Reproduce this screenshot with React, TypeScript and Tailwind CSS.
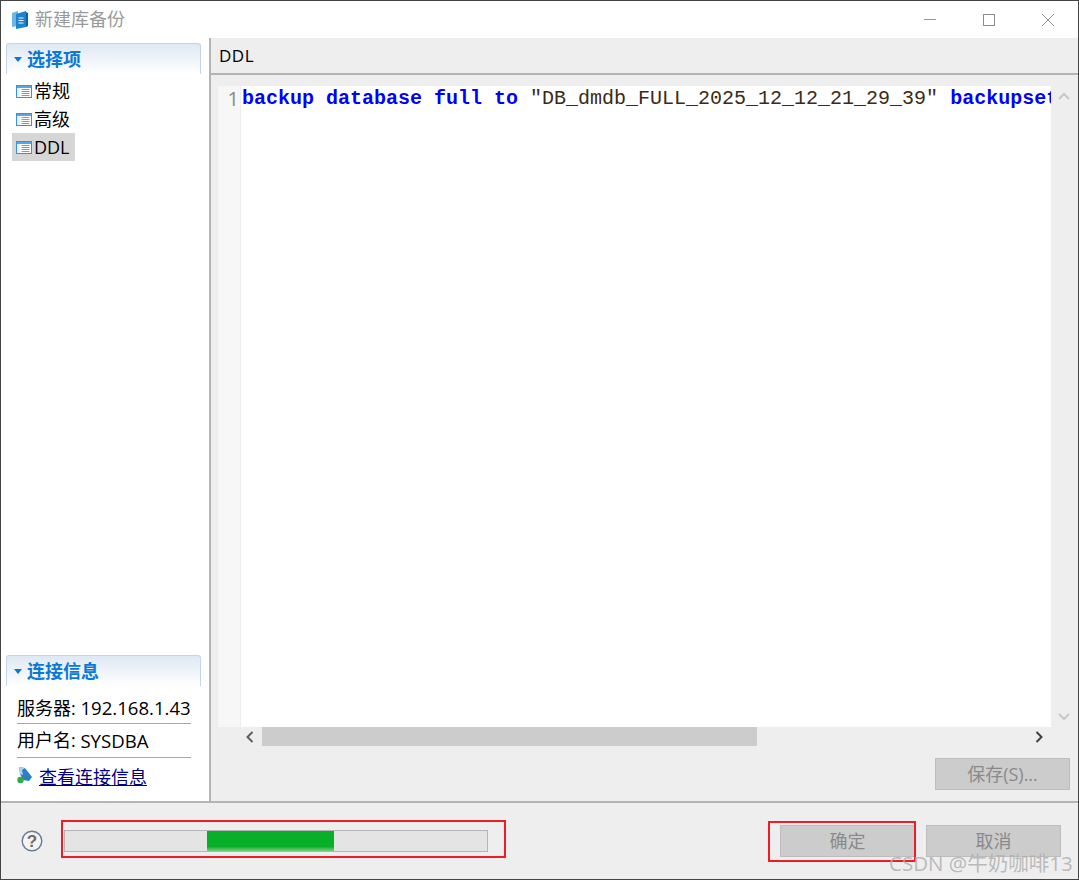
const cjk = { fontFamily: '"Open Sans", "Noto Sans CJK SC", sans-serif' };

function PageIcon() {
  return (
    <svg width="17" height="15" viewBox="0 0 17 15" className="shrink-0">
      <rect x="0.5" y="1.5" width="15" height="12" fill="#fff" stroke="#3d8fd6" />
      <rect x="1" y="2" width="14" height="2" fill="#5ba5e3" />
      <rect x="1" y="4" width="3" height="9" fill="#e6f0f9" />
      <path d="M5.5 5.5h8M5.5 7.5h8M5.5 9.5h8M5.5 11.5h8" stroke="#8a9bb0" strokeWidth="1" />
    </svg>
  );
}

function SectionHeader({ title }: { title: string }) {
  return (
    <div className="h-[31px] ml-[5px] mr-[8px] flex items-center gap-[5px] pl-[7px] rounded-t-[3px] border-t border-x border-[#c3d5e8] border-b-0 bg-gradient-to-b from-[#dfe8f3] to-white">
      <svg width="8" height="5" viewBox="0 0 8 5">
        <path d="M0 0h8L4 5z" fill="#0a78d7" />
      </svg>
      <span className="text-[18px] font-bold text-[#0a78d7] leading-none">{title}</span>
    </div>
  );
}

function NavItem({ label, active }: { label: string; active?: boolean }) {
  return (
    <div className={`h-[28px] w-[63px] flex items-center gap-[1px] pl-[4px] text-[18px] text-black ${active ? 'bg-[#d6d6d6]' : ''}`}>
      <PageIcon />
      <span>{label}</span>
    </div>
  );
}

function DialogButton({ label }: { label: string }) {
  return (
    <div className="h-[32px] w-[135px] flex items-center justify-center bg-[#cccccc] border border-[#bdbdbd] text-[18px] text-[#8a8a8a]">
      {label}
    </div>
  );
}

export default function App() {
  return (
    <div style={cjk} className="relative w-[1079px] h-[880px] bg-white border border-[#444444] flex flex-col overflow-hidden">
      {/* Title bar */}
      <div className="h-[37px] shrink-0 flex items-center bg-white pl-[11px]">
        <svg width="18" height="20" viewBox="0 0 18 20" className="mr-[5px]">
          <path d="M0 3l6-2v15l-6 1z" fill="#6db4e8" />
          <path d="M4 4l10-3v16l-10 2z" fill="#1b84d0" />
          <path d="M14 2l2 1v13l-2 1z" fill="#0d5f9e" />
          <path d="M6.5 8h5M6.5 10.5h5M6.5 13h5" stroke="#e8f3fb" strokeWidth="1.2" />
        </svg>
        <span className="text-[18px] text-[#9a9a9a]">新建库备份</span>
        <div className="ml-auto flex items-center text-[#8c8c8c]">
          <div className="w-[60px] flex justify-center">
            <div className="w-[12px] h-px bg-[#999999]" />
          </div>
          <div className="w-[58px] flex justify-center">
            <div className="w-[12px] h-[12px] border border-[#8c8c8c]" />
          </div>
          <div className="w-[60px] flex justify-center">
            <svg width="14" height="14" viewBox="0 0 14 14">
              <path d="M1 1l12 12M13 1L1 13" stroke="#8c8c8c" strokeWidth="1" fill="none" />
            </svg>
          </div>
        </div>
      </div>

      {/* Main */}
      <div className="flex flex-1 min-h-0">
        {/* Left pane */}
        <div className="w-[210px] shrink-0 bg-white flex flex-col pt-[5px] border-r-2 border-[#b4b4b4]">
          <SectionHeader title="选择项" />
          <div className="pl-[11px] flex flex-col mt-[3px]">
            <NavItem label="常规" />
            <NavItem label="高级" />
            <NavItem label="DDL" active />
          </div>
          <div className="flex-1" />
          <SectionHeader title="连接信息" />
          <div className="px-[16px] pt-[3px] pb-[6px] text-[18px] text-black">
            <div className="h-[35px] pt-[4px] flex items-center border-b border-[#a8a8a8] whitespace-nowrap w-[174px]">
              <span className="whitespace-pre">服务器: </span>
              <span className="text-[18.6px]">192.168.1.43</span>
            </div>
            <div className="h-[34px] flex items-center border-b border-[#a8a8a8] w-[174px]">
              <span className="whitespace-pre">用户名: </span>
              <span className="text-[18.6px]">SYSDBA</span>
            </div>
            <div className="h-[37px] pt-[2px] flex items-center gap-[6px]">
              <svg width="16" height="18" viewBox="0 0 16 18" className="-mt-[6px]">
                <path d="M2 1l6 1 7 9-3 4-6-1-3-6z" fill="#2d7fc4" />
                <path d="M2 1l6 1-3 2 1 5-3-1z" fill="#b5d2ea" />
                <circle cx="3.5" cy="14" r="3.2" fill="#2fae3f" />
              </svg>
              <span className="underline text-[#000080]">查看连接信息</span>
            </div>
          </div>
        </div>

        {/* Right pane */}
        <div className="flex-1 min-w-0 flex flex-col bg-[#eeeeee]">
          <div className="h-[37px] shrink-0 flex items-center pl-[8px] border-b-2 border-[#b4b4b4] text-[17px] tracking-[0.5px] text-black">DDL</div>

          <div className="flex-1 min-h-0 flex flex-col pt-[11px] pl-[7px]">
            {/* Editor */}
            <div className="flex h-[641px] shrink-0">
              <div className="w-[833px] flex bg-white overflow-hidden">
                <div className="w-[23px] shrink-0 bg-[#f7f7f7] border-r border-[#eeeeee] text-right pr-[1px] pt-[1px] text-[20px] leading-[24px] text-[#8a8a8a]">1</div>
                <div
                  className="pl-[1px] pt-[1px] text-[20px] leading-[24px] whitespace-nowrap text-[#3a2a1a]"
                  style={{ fontFamily: '"Liberation Mono", monospace' }}
                >
                  <span className="font-bold text-[#0000ff]">backup database full to </span>
                  <span>"DB_dmdb_FULL_2025_12_12_21_29_39" </span>
                  <span className="font-bold text-[#0000ff]">backupset</span>
                </div>
              </div>
              <div className="flex-1 flex flex-col items-center justify-between py-[6px] pr-[1px]">
                <svg width="12" height="8" viewBox="0 0 12 8">
                  <path d="M1 7l5-5 5 5" stroke="#c8c8c8" strokeWidth="2" fill="none" />
                </svg>
                <svg width="12" height="8" viewBox="0 0 12 8">
                  <path d="M1 1l5 5 5-5" stroke="#c8c8c8" strokeWidth="2" fill="none" />
                </svg>
              </div>
            </div>

            {/* Horizontal scrollbar */}
            <div className="h-[19px] w-[833px] shrink-0 flex items-center">
              <div className="w-[44px] flex justify-center pl-[20px]">
                <svg width="8" height="12" viewBox="0 0 8 12">
                  <path d="M6.5 1L1.5 6l5 5" stroke="#606060" strokeWidth="2" fill="none" />
                </svg>
              </div>
              <div className="w-[495px] h-full bg-[#cccccc]" />
              <div className="flex-1 flex justify-end pr-[8px]">
                <svg width="8" height="12" viewBox="0 0 8 12">
                  <path d="M1.5 1l5 5-5 5" stroke="#404040" strokeWidth="2" fill="none" />
                </svg>
              </div>
            </div>

            <div className="flex justify-end pr-[8px] pt-[12px]">
              <DialogButton label="保存(S)..." />
            </div>
          </div>
        </div>
      </div>

      {/* Footer */}
      <div className="h-[78px] shrink-0 bg-[#eeeeee] border-t-2 border-[#b4b4b4] flex items-center pl-[20px] pr-[17px]">
        <svg width="22" height="22" viewBox="0 0 22 22" className="mr-[21px]">
          <circle cx="11" cy="11" r="9.8" fill="#f4f4f4" stroke="#6b7a96" strokeWidth="1.4" />
          <text x="11" y="17" textAnchor="middle" fontSize="17" fontWeight="700" fill="#6b6b6b" fontFamily="Liberation Sans">?</text>
        </svg>
        <div className="w-[424px] h-[22px] border border-[#b5b5b5] bg-[#e4e4e4] flex">
          <div className="w-[142px]" />
          <div className="w-[127px] h-full bg-gradient-to-b from-[#08b02a] from-80% to-[#6fcf80]" />
        </div>
        <div className="ml-auto flex gap-[11px]">
          <DialogButton label="确定" />
          <DialogButton label="取消" />
        </div>
      </div>

      {/* Red annotation boxes */}
      <div className="absolute left-[60px] top-[819px] w-[445px] h-[38px] border-[2px] border-[#ee1c25]" />
      <div className="absolute left-[767px] top-[820px] w-[148px] h-[41px] border-[2px] border-[#ee1c25]" />

      {/* Watermark */}
      <div className="absolute left-[888px] top-[850px] text-[20.5px] leading-[24px] whitespace-nowrap text-[#b0b0b0]/85">CSDN @牛奶咖啡13</div>
    </div>
  );
}
